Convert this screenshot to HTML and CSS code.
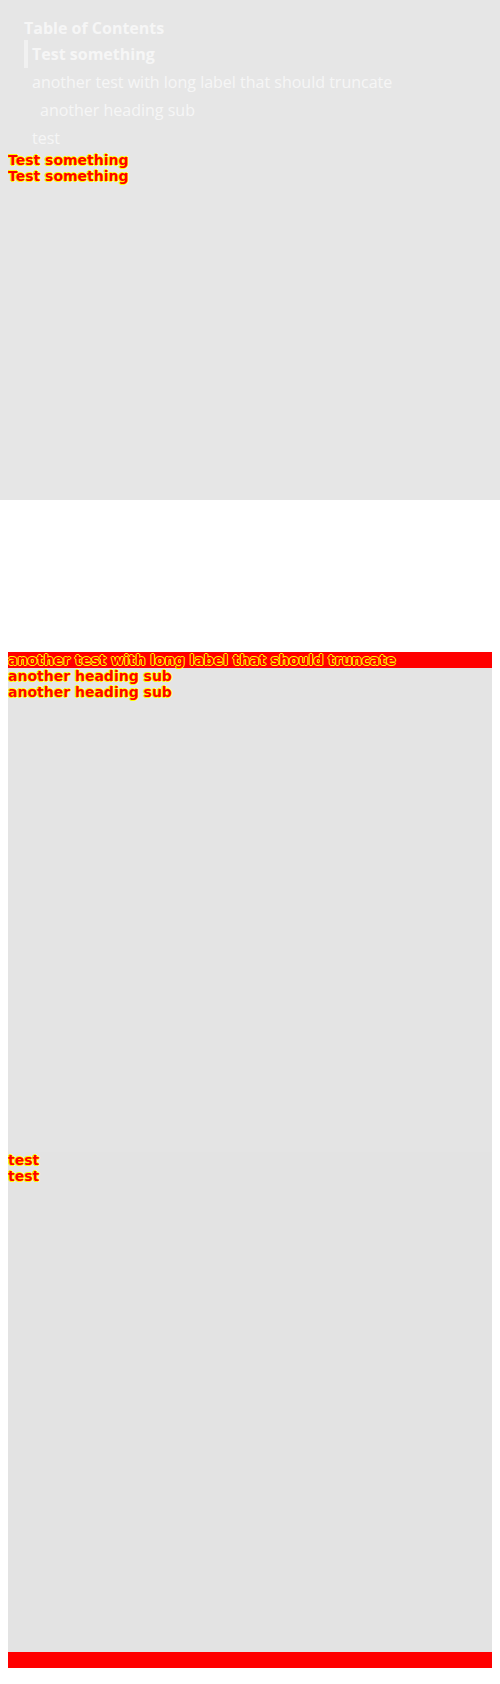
FILE: index.html
```html
<!DOCTYPE html>
<html lang="en">
<head>
<meta charset="utf-8">
<title>Table of Contents test</title>
<link rel="stylesheet" href="styles.css">
</head>
<body>
<nav class="toc">
  <div class="toc-title">Table of Contents</div>
  <ul class="toc-list">
    <li class="toc-item active">Test something</li>
    <li class="toc-item">another test with long label that should truncate</li>
    <li class="toc-item sub">another heading sub</li>
    <li class="toc-item">test</li>
  </ul>
</nav>
<main class="content">
  <section class="sec sec-1">
    <div class="mark">Test something</div>
    <h2 class="mark">Test something</h2>
  </section>
  <section class="sec sec-2">
    <h2 class="mark">another test with long label that should truncate</h2>
  </section>
  <section class="sec sec-3">
    <div class="mark">another heading sub</div>
    <h3 class="mark">another heading sub</h3>
  </section>
  <section class="sec sec-4">
    <div class="mark">test</div>
    <h2 class="mark">test</h2>
  </section>
  <div class="end-bar"></div>
</main>
</body>
</html>
```

FILE: styles.css
```css
html, body {
  background: #ffffff;
}

body {
  margin: 8px;
  font-family: "Open Sans", "DejaVu Sans", sans-serif;
}

.toc {
  position: absolute;
  top: 0;
  left: 0;
  width: 500px;
  height: 500px;
  box-sizing: border-box;
  padding: 16px 24px;
  background: #e6e6e6;
  color: #f6f6f6;
  font-family: "Open Sans", sans-serif;
  font-size: 16px;
}

.toc-title {
  font-weight: 700;
  line-height: 24px;
}

.toc-list {
  list-style: none;
  margin: 0;
  padding: 0;
}

.toc-item {
  line-height: 28px;
  padding-left: 4px;
  border-left: 4px solid transparent;
  white-space: nowrap;
  overflow: hidden;
  text-overflow: ellipsis;
}

.toc-item.active {
  font-weight: 700;
  border-left-color: #f1f1f1;
}

.toc-item.sub {
  padding-left: 12px;
}

.content {
  position: relative;
  padding-top: 144px;
}

.sec {
  box-sizing: border-box;
}

.sec-1 {
  height: 500px;
}

.sec-2 {
  height: 16px;
  background: #ff0000;
}

.sec-3 {
  height: 484px;
  background: #e4e4e4;
}

.sec-4 {
  height: 500px;
  background: #e3e3e3;
}

.end-bar {
  height: 16px;
  background: #ff0000;
}

.mark {
  margin: 0;
  font-family: "DejaVu Sans", sans-serif;
  font-weight: 700;
  font-size: 14px;
  line-height: 16px;
  color: #ff0000;
  white-space: nowrap;
  text-shadow:
    1px 0 0 #ffff00, -1px 0 0 #ffff00, 0 1px 0 #ffff00, 0 -1px 0 #ffff00;
}
```
